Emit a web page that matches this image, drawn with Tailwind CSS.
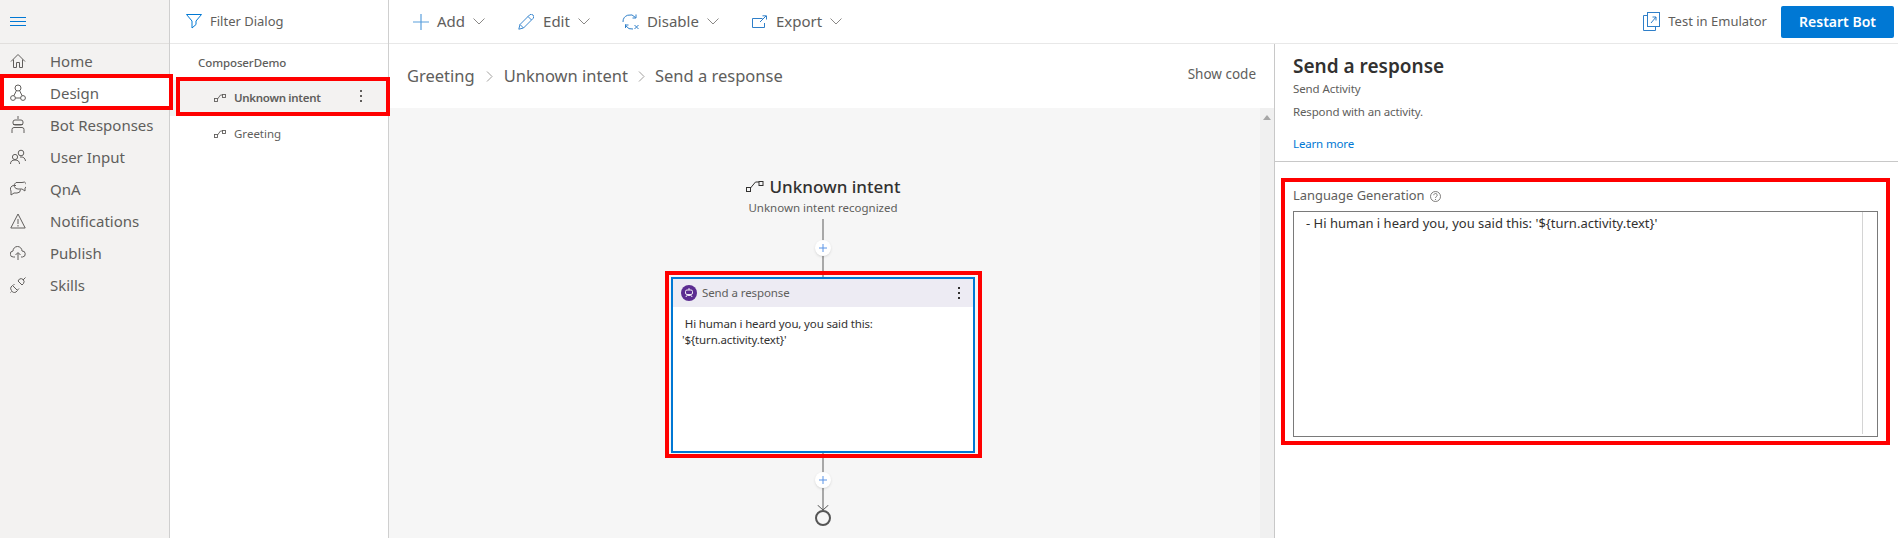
<!DOCTYPE html>
<html>
  <head>
    <title>Composer</title>
    <meta charset="UTF-8">
    <meta name="viewport" content="width=device-width, initial-scale=1.0">
    <script src="https://cdn.jsdelivr.net/npm/@tailwindcss/browser@4"></script>
  </head>
  <body class="bg-white">
    <div class="relative flex h-[538px] w-[1898px] overflow-hidden bg-white font-['Noto_Sans',sans-serif] text-[#605e5c]">

      <!-- left navigation -->
      <nav class="w-[170px] shrink-0 border-r border-[#cfcfcf] bg-[#f3f2f1]">
        <div class="flex h-[44px] items-center border-b border-[#e1dfdd] pl-[10px]">
          <svg width="16" height="10" viewBox="0 0 16 10" fill="none" stroke="#0078d4" stroke-width="1"><path d="M0 .5h16M0 4.5h16M0 8.5h16"/></svg>
        </div>
        <ul class="pt-[1px] text-[15px]">
          <li class="flex h-[32px] items-center">
            <svg class="ml-[10px] mr-[24px]" width="16" height="16" viewBox="0 0 16 16" fill="none" stroke="#605e5c"><path d="M1 8.500 8 1.500l7 7M3.500 6.500v8h3v-5h3v5h3v-8"/></svg>
            <span>Home</span>
          </li>
          <li class="flex h-[32px] items-center bg-white">
            <svg class="ml-[10px] mr-[24px]" width="16" height="18" viewBox="0 0 16 18" fill="none" stroke="#605e5c"><circle cx="8" cy="4" r="3"/><circle cx="3" cy="14" r="2.400"/><circle cx="13" cy="14" r="2.400"/><path d="M6.500 6.500 3.800 11.800M9.500 6.500l2.700 5.300M5.400 14h5.200"/></svg>
            <span>Design</span>
          </li>
          <li class="flex h-[32px] items-center">
            <svg class="ml-[10px] mr-[24px]" width="16" height="18" viewBox="0 0 16 18" fill="none" stroke="#605e5c"><path d="M8 0v3M2 17v-3.500q0-2 2-2h8q2 0 2 2V17M3 8.500h10"/><rect x="3" y="4" width="10" height="5" rx="2"/></svg>
            <span>Bot Responses</span>
          </li>
          <li class="flex h-[32px] items-center">
            <svg class="ml-[10px] mr-[24px]" width="16" height="16" viewBox="0 0 16 16" fill="none" stroke="#605e5c"><circle cx="5" cy="8" r="2.600"/><circle cx="11" cy="4" r="2.800"/><path d="M.5 15q0-4 4.500-4t4.500 4M10 8q5-.5 5.500 4"/></svg>
            <span>User Input</span>
          </li>
          <li class="flex h-[32px] items-center">
            <svg class="ml-[10px] mr-[24px]" width="16" height="16" viewBox="0 0 16 16" fill="none" stroke="#605e5c"><path d="M6 4.500H4a3.500 3.500 0 0 0-3 5.500v4l3-2h3a3.500 3.500 0 0 0 3.500-3.500"/><path d="M6 1.500h6a3 3 0 0 1 3 5.500v3l-3-2H8a3.500 3.500 0 0 1-2-6.500z"/></svg>
            <span>QnA</span>
          </li>
          <li class="flex h-[32px] items-center">
            <svg class="ml-[10px] mr-[24px]" width="16" height="16" viewBox="0 0 16 16" fill="none" stroke="#605e5c"><path d="M8 1 .8 15h14.400zM8 6v5M8 12v1.500"/></svg>
            <span>Notifications</span>
          </li>
          <li class="flex h-[32px] items-center">
            <svg class="ml-[10px] mr-[24px]" width="16" height="16" viewBox="0 0 16 16" fill="none" stroke="#605e5c"><path d="M5 12H3.500a3 3 0 0 1-.5-6 4.500 4.500 0 0 1 9 0 3 3 0 0 1 .5 6H11M8 15V8M5.500 10 8 7.500l2.500 2.500"/></svg>
            <span>Publish</span>
          </li>
          <li class="flex h-[32px] items-center">
            <svg class="ml-[10px] mr-[24px]" width="16" height="16" viewBox="0 0 16 16" fill="none" stroke="#605e5c"><path d="M2.500 8.500 7.500 13.500 6 15a3 3 0 0 1-4.500-1.500A3 3 0 0 1 1 10zM1.500 14.500.5 15.500M8 4l4 4 1.500-1.500a3 3 0 0 0-.5-4 3 3 0 0 0-3.500-.5zM13 3l2.500-2.500M4.500 7 3 8.500M9 11.500 7.500 13"/></svg>
            <span>Skills</span>
          </li>
        </ul>
      </nav>

      <!-- dialog list -->
      <aside class="w-[219px] shrink-0 border-r border-[#cfcfcf]">
        <div class="flex h-[44px] items-center border-b border-[#e8e8e8] pl-[16px] text-[13px]">
          <svg class="mr-[8px]" width="16" height="15" viewBox="0 0 16 15" fill="none" stroke="#0078d4"><path d="M.5.500h15L10 7v3.500L6 14V7z"/></svg>
          <span>Filter Dialog</span>
        </div>
        <div class="pl-[28px] pt-[10px] text-[11.500px] font-medium leading-[18px] tracking-[-0.1px]">ComposerDemo</div>
        <div class="mt-[8px] flex h-[36px] items-center bg-[#f3f2f1] pl-[44px] text-[11.500px] font-semibold tracking-[-0.3px]">
          <svg class="mr-[8px]" width="12" height="8" viewBox="0 0 12 8" fill="none" stroke="#605e5c" stroke-width="0.9"><rect x=".5" y="4.500" width="3" height="3"/><rect x="8.500" y=".5" width="3" height="3"/><path d="m3.500 5 3-4h2"/></svg>
          <span>Unknown intent</span>
          <span class="mb-[4px] ml-auto mr-[26px] flex flex-col gap-[3px]">
            <i class="block h-[2px] w-[2px] bg-[#605e5c]"></i><i class="block h-[2px] w-[2px] bg-[#605e5c]"></i><i class="block h-[2px] w-[2px] bg-[#605e5c]"></i>
          </span>
        </div>
        <div class="flex h-[36px] items-center pl-[44px] text-[11.500px]">
          <svg class="mr-[8px]" width="12" height="8" viewBox="0 0 12 8" fill="none" stroke="#605e5c" stroke-width="0.9"><rect x=".5" y="4.500" width="3" height="3"/><rect x="8.500" y=".5" width="3" height="3"/><path d="m3.500 5 3-4h2"/></svg>
          <span>Greeting</span>
        </div>
      </aside>

      <main class="flex min-w-0 flex-1 flex-col">
        <!-- toolbar -->
        <div class="flex h-[44px] shrink-0 items-center border-b border-[#e8e8e8] text-[15px]">
          <div class="ml-[24px] flex items-center">
            <svg class="mr-[8px]" width="16" height="16" viewBox="0 0 16 16" stroke="#5a9fdc" stroke-width="1.200"><path d="M8 0v16M0 8h16"/></svg>
            <span>Add</span>
            <svg class="ml-[8px]" width="12" height="7" viewBox="0 0 12 7" fill="none" stroke="#8a8886"><path d="m.5.5 5.500 5.500 5.500-5.500"/></svg>
          </div>
          <div class="ml-[33px] flex items-center">
            <svg class="mr-[9px]" width="16" height="16" viewBox="0 0 16 16" fill="none" stroke="#3a87cf"><path d="M.8 15.200 2 10.500 11.500 1a2 2 0 0 1 3.500 3.500L5.500 14zM2 10.500l3.500 3.500M10 2.500 13.500 6"/></svg>
            <span>Edit</span>
            <svg class="ml-[8px]" width="12" height="7" viewBox="0 0 12 7" fill="none" stroke="#8a8886"><path d="m.5.5 5.500 5.500 5.500-5.500"/></svg>
          </div>
          <div class="ml-[32px] flex items-center">
            <svg class="mr-[7px]" width="18" height="16" viewBox="0 0 18 16" fill="none" stroke="#2f7fc9"><path d="M1 8a7 7 0 0 1 12.500-4.500M14 .5v3.500h-3.500M3.500 10.500l0 3.500M3 11h3.500M4 12a7 7 0 0 0 7 3M12.500 11l4 4M16.500 11l-4 4"/></svg>
            <span>Disable</span>
            <svg class="ml-[8px]" width="12" height="7" viewBox="0 0 12 7" fill="none" stroke="#8a8886"><path d="m.5.5 5.500 5.500 5.500-5.500"/></svg>
          </div>
          <div class="ml-[33px] flex items-center">
            <svg class="mr-[9px]" width="15" height="13" viewBox="0 0 15 13" fill="none" stroke="#2f7fc9"><path d="M10.500 3.500H.5v9h12V8M8 7l6-6M10.500.8H14.500V4.500"/></svg>
            <span>Export</span>
            <svg class="ml-[8px]" width="12" height="7" viewBox="0 0 12 7" fill="none" stroke="#8a8886"><path d="m.5.5 5.500 5.500 5.500-5.500"/></svg>
          </div>
          <div class="ml-auto flex items-center text-[13px]">
            <svg class="mr-[8px]" width="17" height="19" viewBox="0 0 17 19" fill="none" stroke="#2f7fc9"><path d="M4 3.500H.5v15h12V15"/><rect x="4.500" y=".5" width="12" height="14"/><path d="m8 11 5-6M9.500 5H13v3.500"/></svg>
            <span>Test in Emulator</span>
          </div>
          <button class="ml-[14px] mr-[4px] h-[32px] w-[113px] rounded-[2px] bg-[#0078d4] text-[14px] font-semibold text-white">Restart Bot</button>
        </div>

        <div class="flex min-h-0 flex-1">
          <!-- canvas column -->
          <section class="flex w-[886px] shrink-0 flex-col border-r border-[#c8c8c8]">
            <div class="flex h-[64px] shrink-0 items-center pl-[18px] pr-[18px] text-[16.500px]">
              <span>Greeting</span>
              <svg class="mx-[11px]" width="7" height="11" viewBox="0 0 7 11" fill="none" stroke="#a19f9d"><path d="m1 .5 5 5-5 5"/></svg>
              <span>Unknown intent</span>
              <svg class="mx-[10px]" width="7" height="11" viewBox="0 0 7 11" fill="none" stroke="#a19f9d"><path d="m1 .5 5 5-5 5"/></svg>
              <span>Send a response</span>
              <span class="ml-auto -translate-y-[2px] text-[13.500px]">Show code</span>
            </div>
            <div class="flex min-h-0 flex-1">
              <div class="flex min-w-0 flex-1 flex-col items-center bg-[#f6f6f6] pr-[3px] pt-[68px]">
                <div class="flex h-[22px] items-center text-[17px] font-medium text-[#323130]">
                  <svg class="mr-[6px]" width="18" height="12" viewBox="0 0 18 12" fill="none" stroke="#323130"><rect x=".5" y="6.500" width="4" height="4"/><rect x="13" y=".5" width="4" height="4"/><path d="m4.500 7 5-6H13"/></svg>
                  <span>Unknown intent</span>
                </div>
                <div class="mt-[1px] h-[18px] text-[11.500px] leading-[18px]">Unknown intent recognized</div>
                <div class="relative mt-[2px] h-[58px] w-[2px] bg-[#a8a8a8]">
                  <div class="absolute -left-[7px] top-[21px] flex h-[16px] w-[16px] items-center justify-center rounded-full bg-white shadow-sm">
                    <svg width="8" height="8" viewBox="0 0 8 8" stroke="#5a94e6"><path d="M4 0v8M0 4h8"/></svg>
                  </div>
                </div>
                <div class="h-[176px] w-[304px] shrink-0 overflow-hidden border-2 border-[#0078d4] bg-white">
                  <div class="flex h-[28px] items-center bg-[#edebf3] pl-[8px] pr-[13px] text-[11.500px] tracking-[-0.1px]">
                    <div class="mr-[5px] flex h-[16px] w-[16px] items-center justify-center rounded-full bg-[#5c2d91]">
                      <svg width="10" height="10" viewBox="0 0 10 10" fill="none" stroke="#fff" stroke-width="0.9"><path d="M5 0v2"/><rect x="1.500" y="2" width="7" height="4.500" rx="1.500"/><path d="M2 9q0-1.500 1.500-1.500h3Q8 7.500 8 9"/></svg>
                    </div>
                    <span>Send a response</span>
                    <span class="ml-auto flex flex-col gap-[3px]">
                      <i class="block h-[2px] w-[2px] bg-[#323130]"></i><i class="block h-[2px] w-[2px] bg-[#323130]"></i><i class="block h-[2px] w-[2px] bg-[#323130]"></i>
                    </span>
                  </div>
                  <p class="pl-[9px] pt-[9px] text-[11.500px] leading-[16px] tracking-[-0.15px] text-[#323130]">&nbsp;Hi human i heard you, you said this:<br>'${turn.activity.text}'</p>
                </div>
                <div class="relative h-[56px] w-[2px] bg-[#a8a8a8]">
                  <div class="absolute -left-[7px] top-[19px] flex h-[16px] w-[16px] items-center justify-center rounded-full bg-white shadow-sm">
                    <svg width="8" height="8" viewBox="0 0 8 8" stroke="#5a94e6"><path d="M4 0v8M0 4h8"/></svg>
                  </div>
                </div>
                <svg class="-mt-[4px]" width="18" height="22" viewBox="0 0 18 22" fill="none" stroke="#555"><path d="m3.500 0 5.500 5 5.500-5" /><circle cx="9" cy="13" r="7" stroke-width="2"/></svg>
              </div>
              <!-- scrollbar -->
              <div class="flex w-[14px] shrink-0 justify-center bg-[#f0f0f0] pt-[7px]">
                <svg width="8" height="5" viewBox="0 0 8 5" fill="#a6a6a6"><path d="M4 0 8 5H0z"/></svg>
              </div>
            </div>
          </section>

          <!-- property panel -->
          <section class="min-w-0 flex-1">
            <div class="h-[118px] border-b border-[#c8c8c8] pl-[18px] pt-[8px]">
              <h2 class="text-[19px] font-semibold leading-[28px] text-[#323130]">Send a response</h2>
              <div class="mt-[1px] text-[11.500px] leading-[16px] tracking-[-0.1px]">Send Activity</div>
              <div class="mt-[7px] text-[11.500px] leading-[16px] tracking-[-0.15px]">Respond with an activity.</div>
              <a class="mt-[16px] block text-[11.500px] leading-[16px] tracking-[-0.15px] text-[#0078d4]">Learn more</a>
            </div>
            <div class="pl-[18px] pr-[20px] pt-[22px]">
              <label class="flex h-[24px] items-center text-[12.900px]">
                Language Generation
                <svg class="ml-[5px]" width="11" height="11" viewBox="0 0 11 11" fill="none" stroke="#605e5c" stroke-width="0.8"><circle cx="5.500" cy="5.500" r="5"/><path d="M3.800 4.200a1.700 1.700 0 1 1 2.600 1.400c-.6.4-.9.700-.9 1.400M5.500 8v1"/></svg>
              </label>
              <div class="mt-[3px] flex h-[226px] border border-[#7a7a7a]">
                <div class="flex-1 pl-[12px] pt-[2px] text-[13px] leading-[18px] text-[#323130]">- Hi human i heard you, you said this: '${turn.activity.text}'</div>
                <div class="mb-[2px] w-[15px] border-l border-[#d4d4d4]"></div>
              </div>
            </div>
          </section>
        </div>
      </main>

      <!-- red annotation boxes -->
      <div class="absolute left-0 top-[74px] h-[36px] w-[173px] border-[4px] border-[#ff0000]"></div>
      <div class="absolute left-[176px] top-[77px] h-[39px] w-[214px] border-[4px] border-[#ff0000]"></div>
      <div class="absolute left-[665px] top-[271px] h-[187px] w-[317px] border-[4px] border-[#ff0000]"></div>
      <div class="absolute left-[1281px] top-[178px] h-[267px] w-[609px] border-[4px] border-[#ff0000]"></div>
    </div>
  </body>
</html>
